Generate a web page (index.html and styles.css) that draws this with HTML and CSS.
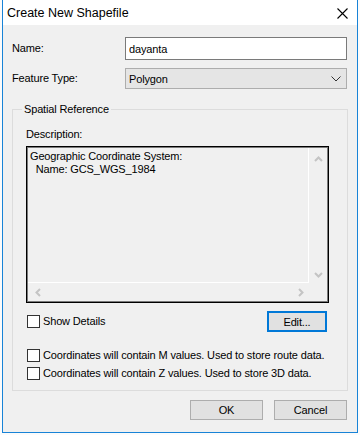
FILE: index.html
```html
<!DOCTYPE html>
<html lang="en">
<head>
    <meta charset="UTF-8">
    <meta name="viewport" content="width=device-width, initial-scale=1.0">
    <title>Create New Shapefile</title>
    <link rel="stylesheet" href="styles.css">
</head>
<body>
    <div class="window">
        <div class="titlebar">
            <span class="title">Create New Shapefile</span>
            <svg class="close" width="11" height="11" viewBox="0 0 11 11">
                <path d="M0.5 0.5 L10.5 10.5 M10.5 0.5 L0.5 10.5" stroke="#000" stroke-width="1.1" fill="none"/>
            </svg>
        </div>

        <div class="content">
            <div class="row">
                <label>Name:</label>
                <input class="textbox" type="text" value="dayanta">
            </div>
            <div class="row second">
                <label>Feature Type:</label>
                <div class="combo">
                    <span>Polygon</span>
                    <svg width="10" height="6" viewBox="0 0 10 6">
                        <path d="M0.5 0.5 L5 5 L9.5 0.5" stroke="#333" stroke-width="1" fill="none"/>
                    </svg>
                </div>
            </div>

            <fieldset class="group">
                <legend>Spatial Reference</legend>
                <div class="desc-label">Description:</div>
                <div class="desc-box">
                    <div class="desc-text">Geographic Coordinate System:
  Name: GCS_WGS_1984</div>
                    <div class="vscroll">
                        <svg width="9" height="6" viewBox="0 0 9 6"><path d="M1 5 L4.5 1.5 L8 5" stroke="#c4c4c4" stroke-width="2" fill="none"/></svg>
                        <svg width="9" height="6" viewBox="0 0 9 6"><path d="M1 1 L4.5 4.5 L8 1" stroke="#c4c4c4" stroke-width="2" fill="none"/></svg>
                    </div>
                    <div class="hscroll">
                        <svg width="6" height="9" viewBox="0 0 6 9"><path d="M5 1 L1.5 4.5 L5 8" stroke="#c4c4c4" stroke-width="2" fill="none"/></svg>
                        <svg width="6" height="9" viewBox="0 0 6 9"><path d="M1 1 L4.5 4.5 L1 8" stroke="#c4c4c4" stroke-width="2" fill="none"/></svg>
                    </div>
                    <div class="corner"></div>
                </div>

                <div class="detail-row">
                    <label class="check"><input type="checkbox"> Show Details</label>
                    <button class="btn focused">Edit...</button>
                </div>

                <div class="checks">
                    <label class="check"><input type="checkbox"> Coordinates will contain M values. Used to store route data.</label>
                    <label class="check"><input type="checkbox"> Coordinates will contain Z values. Used to store 3D data.</label>
                </div>
            </fieldset>

            <div class="footer">
                <button class="btn">OK</button>
                <button class="btn">Cancel</button>
            </div>
        </div>
    </div>
</body>
</html>
```

FILE: styles.css
```css
* {
    box-sizing: border-box;
    margin: 0;
    padding: 0;
}

body {
    background: #fbfbfb;
    font-family: "Liberation Sans", Arial, sans-serif;
    font-size: 11px;
    letter-spacing: -0.15px;
    color: #000;
    overflow: hidden;
}

.window {
    margin-left: 2px;
    width: 356px;
    height: 433px;
    border: 1px solid #1883d7;
    border-top: none;
    background: #f0f0f0;
    display: flex;
    flex-direction: column;
}

.titlebar {
    height: 25px;
    background: #ffffff;
    display: flex;
    align-items: center;
    justify-content: space-between;
    padding-left: 4px;
    padding-right: 9px;
}

.title {
    font-size: 12.5px;
    letter-spacing: 0;
    margin-top: 1px;
}

.close {
    margin-top: 1px;
}

.content {
    flex: 1;
    padding: 12px 9px 0 9px;
}

.row {
    display: grid;
    grid-template-columns: 113px 1fr;
    align-items: center;
    height: 23px;
}

.row.second {
    margin-top: 8px;
    height: 21px;
}

label {
    line-height: 13px;
}

.textbox {
    width: 222px;
    height: 23px;
    border: 1px solid #7a7a7a;
    background: #ffffff;
    font: inherit;
    letter-spacing: inherit;
    padding: 0 3px;
    outline: none;
}

.combo {
    width: 222px;
    height: 21px;
    border: 1px solid #adadad;
    background: #e5e5e5;
    display: flex;
    align-items: center;
    justify-content: space-between;
    padding: 0 5px 0 3px;
}

.combo svg {
    margin-top: 1px;
}

.group {
    margin-top: 14px;
    border: 1px solid #dcdcdc;
    padding: 12px 0 8px 13px;
}

.group legend {
    margin-left: -4px;
    padding: 0 2px;
    line-height: 13px;
}

.desc-label {
    line-height: 13px;
    margin-bottom: 5px;
}

.desc-box {
    width: 303px;
    height: 157px;
    border: 1px solid #000;
    box-shadow: inset 0 0 0 1px #7a7a7a;
    padding: 1px;
    display: grid;
    grid-template-columns: 1fr 18px;
    grid-template-rows: 1fr 18px;
}

.desc-text {
    white-space: pre;
    line-height: 13px;
    padding: 2px 0 0 2px;
    border-right: 1px solid #ffffff;
    border-bottom: 1px solid #ffffff;
}

.vscroll {
    display: flex;
    flex-direction: column;
    justify-content: space-between;
    align-items: center;
    padding: 8px 0 5px 0;
}

.hscroll {
    display: flex;
    justify-content: space-between;
    align-items: center;
    padding: 0 5px 0 7px;
}

.detail-row {
    width: 303px;
    margin-top: 8px;
    display: flex;
    justify-content: space-between;
    align-items: flex-start;
}

.check {
    display: flex;
    align-items: center;
    height: 18px;
    margin-left: 1px;
}

.check input {
    appearance: none;
    -webkit-appearance: none;
    width: 13px;
    height: 13px;
    border: 1px solid #333333;
    background: #ffffff;
    margin-right: 3px;
}

.detail-row .check {
    margin-top: 1px;
}

.checks {
    margin-top: 14px;
}

.btn {
    width: 73px;
    height: 20px;
    border: 1px solid #adadad;
    background: #e1e1e1;
    font: inherit;
    letter-spacing: inherit;
    color: #000;
}

.btn.focused {
    width: 60px;
    height: 21px;
    border: 2px solid #0078d7;
    margin-right: 2px;
}

.footer {
    margin-top: 9px;
    display: flex;
    justify-content: flex-end;
    gap: 11px;
    padding-right: 1px;
}
```
